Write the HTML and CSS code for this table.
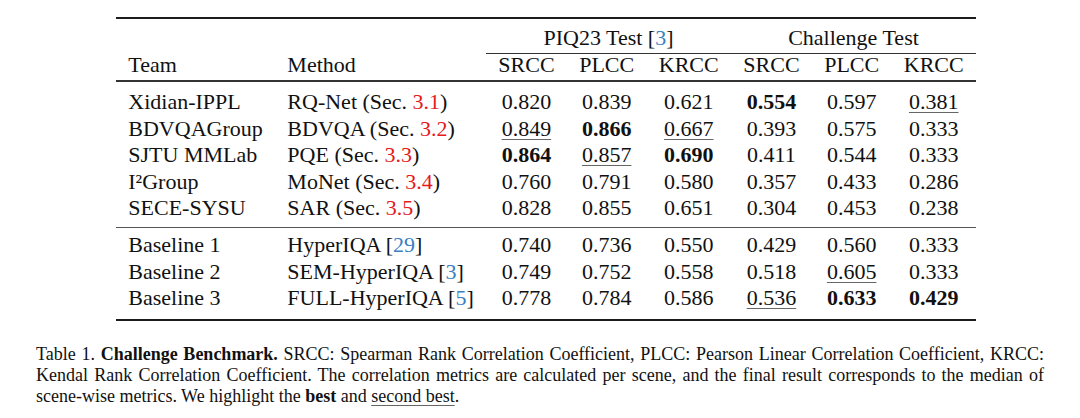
FILE: index.html
```html
<!DOCTYPE html>
<html lang="en">
<head>
<meta charset="utf-8">
<title>Challenge Benchmark</title>
<link rel="stylesheet" href="styles.css">
</head>
<body>
<figure class="figure">
  <table class="results">
    <thead>
      <tr class="group-row">
        <th class="txt"></th>
        <th class="txt"></th>
        <th class="group" colspan="3">PIQ23 Test [<span class="cite">3</span>]</th>
        <th class="group" colspan="3">Challenge Test</th>
      </tr>
      <tr class="head-row">
        <th class="txt">Team</th>
        <th class="txt">Method</th>
        <th>SRCC</th><th>PLCC</th><th>KRCC</th>
        <th>SRCC</th><th>PLCC</th><th>KRCC</th>
      </tr>
    </thead>
    <tbody class="teams">
      <tr>
        <td class="txt">Xidian-IPPL</td>
        <td class="txt">RQ-Net (Sec. <span class="ref">3.1</span>)</td>
        <td>0.820</td><td>0.839</td><td>0.621</td>
        <td class="best">0.554</td><td>0.597</td><td><span class="second">0.381</span></td>
      </tr>
      <tr>
        <td class="txt">BDVQAGroup</td>
        <td class="txt">BDVQA (Sec. <span class="ref">3.2</span>)</td>
        <td><span class="second">0.849</span></td><td class="best">0.866</td><td><span class="second">0.667</span></td>
        <td>0.393</td><td>0.575</td><td>0.333</td>
      </tr>
      <tr>
        <td class="txt">SJTU MMLab</td>
        <td class="txt">PQE (Sec. <span class="ref">3.3</span>)</td>
        <td class="best">0.864</td><td><span class="second">0.857</span></td><td class="best">0.690</td>
        <td>0.411</td><td>0.544</td><td>0.333</td>
      </tr>
      <tr>
        <td class="txt">I²Group</td>
        <td class="txt">MoNet (Sec. <span class="ref">3.4</span>)</td>
        <td>0.760</td><td>0.791</td><td>0.580</td>
        <td>0.357</td><td>0.433</td><td>0.286</td>
      </tr>
      <tr>
        <td class="txt">SECE-SYSU</td>
        <td class="txt">SAR (Sec. <span class="ref">3.5</span>)</td>
        <td>0.828</td><td>0.855</td><td>0.651</td>
        <td>0.304</td><td>0.453</td><td>0.238</td>
      </tr>
    </tbody>
    <tbody class="baselines">
      <tr>
        <td class="txt">Baseline 1</td>
        <td class="txt">HyperIQA [<span class="cite">29</span>]</td>
        <td>0.740</td><td>0.736</td><td>0.550</td>
        <td>0.429</td><td>0.560</td><td>0.333</td>
      </tr>
      <tr>
        <td class="txt">Baseline 2</td>
        <td class="txt">SEM-HyperIQA [<span class="cite">3</span>]</td>
        <td>0.749</td><td>0.752</td><td>0.558</td>
        <td>0.518</td><td><span class="second">0.605</span></td><td>0.333</td>
      </tr>
      <tr>
        <td class="txt">Baseline 3</td>
        <td class="txt">FULL-HyperIQA [<span class="cite">5</span>]</td>
        <td>0.778</td><td>0.784</td><td>0.586</td>
        <td><span class="second">0.536</span></td><td class="best">0.633</td><td class="best">0.429</td>
      </tr>
    </tbody>
  </table>
  <figcaption class="caption">Table 1. <b>Challenge Benchmark.</b> SRCC: Spearman Rank Correlation Coefficient, PLCC: Pearson Linear Correlation Coefficient, KRCC: Kendal Rank Correlation Coefficient. The correlation metrics are calculated per scene, and the final result corresponds to the median of scene-wise metrics. We highlight the <b>best</b> and <span class="second">second best</span>.</figcaption>
</figure>
</body>
</html>
```

FILE: styles.css
```css
html, body {
  margin: 0;
  padding: 0;
  background: #ffffff;
}

body {
  color: #111111;
  font-family: "Liberation Serif", "Times New Roman", serif;
}

.figure {
  margin: 17px 0 0 36px;
  width: 1008px;
}

.results {
  border-collapse: separate;
  border-spacing: 0;
  margin-left: 80px;
  font-size: 22px;
  line-height: 22px;
}

.results th,
.results td {
  padding: 2.25px 12.3px;
  text-align: center;
  font-weight: normal;
  white-space: nowrap;
}

.results .txt {
  text-align: left;
}

.results .best {
  font-weight: bold;
}

.group-row th {
  border-top: 2px solid #1c1c1c;
  padding-top: 7.5px;
  padding-bottom: 4.5px;
}

.group-row .group {
  border-bottom: 1px solid #333333;
}

.head-row th {
  padding-top: 0;
  padding-bottom: 4px;
  border-bottom: 2px solid #333333;
}

.teams tr:first-child td {
  padding-top: 9px;
}

.teams tr:last-child td {
  padding-bottom: 8px;
  border-bottom: 1px solid #555555;
}

.baselines tr:first-child td {
  padding-top: 6px;
}

.baselines tr:last-child td {
  padding-bottom: 9.5px;
  border-bottom: 2px solid #1c1c1c;
}

.second {
  text-decoration: underline;
  text-decoration-thickness: 1px;
  text-underline-offset: 3px;
  text-decoration-color: #666666;
}

.ref {
  color: #e41a1c;
}

.cite {
  color: #3a80c2;
}

.caption {
  margin: 23px 0 0 0;
  font-size: 18px;
  line-height: 21px;
  text-align: justify;
  color: #111111;
}

.caption b {
  font-weight: bold;
}
```
